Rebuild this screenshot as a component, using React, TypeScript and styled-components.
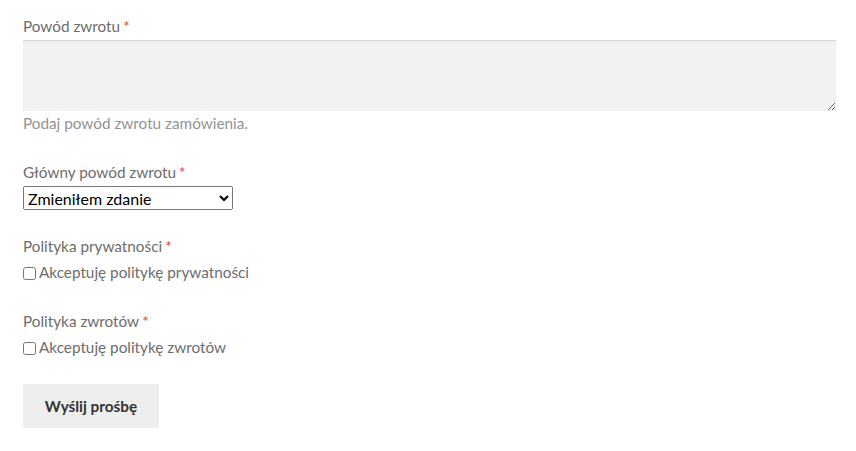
import { createGlobalStyle, styled } from "styled-components";

const GlobalStyle = createGlobalStyle`
    html, body {
        margin: 0;
        padding: 0;
        background: #ffffff;
    }
    body {
        font-family: Lato, "Liberation Sans", sans-serif;
        font-size: 15.3px;
        color: #6d6d6d;
    }
`;

const Form = styled.form`
    display: flex;
    flex-direction: column;
    padding: 14px 20px 0 23px;
`;

const FieldRow = styled.div<{$gap?: number}>`
    display: flex;
    flex-direction: column;
    align-items: flex-start;
    margin-bottom: ${props => props.$gap ?? 24}px;
`;

const Label = styled.label`
    line-height: 25px;
    color: #6d6d6d;
`;

const Required = styled.span`
    color: #e2401c;
    margin-left: 3px;
`;

const TextArea = styled.textarea`
    box-sizing: border-box;
    width: 813px;
    height: 71px;
    margin-top: 1px;
    border: 0;
    background-color: #f2f2f2;
    box-shadow: inset 0 1px 1px rgba(0, 0, 0, 0.125);
    font-family: inherit;
`;

const HelpText = styled.span`
    line-height: 25px;
    color: #939393;
`;

const Select = styled.select`
    box-sizing: border-box;
    width: 210px;
    height: 24px;
    margin-top: 1px;
    font-family: Lato, "Liberation Sans", sans-serif;
    font-size: 16px;
    color: #000000;
`;

const CheckLine = styled.label`
    display: flex;
    align-items: center;
    margin-top: 1px;
    line-height: 25px;
    color: #6d6d6d;
`;

const CheckBox = styled.input`
    width: 13px;
    height: 13px;
    margin: 1px 3px 0 0;
`;

const SubmitButton = styled.button`
    align-self: flex-start;
    width: 136px;
    height: 44px;
    border: 0;
    background-color: #eeeeee;
    color: #333333;
    font-family: Lato, "Liberation Sans", sans-serif;
    font-size: 15.3px;
    font-weight: 700;
`;

export default function App() {
    return (
        <>
            <GlobalStyle />
            <Form onSubmit={e => e.preventDefault()}>
                <FieldRow>
                    <Label>Powód zwrotu<Required>*</Required></Label>
                    <TextArea />
                    <HelpText>Podaj powód zwrotu zamówienia.</HelpText>
                </FieldRow>
                <FieldRow>
                    <Label>Główny powód zwrotu<Required>*</Required></Label>
                    <Select defaultValue="changed">
                        <option value="changed">Zmieniłem zdanie</option>
                        <option value="damaged">Produkt uszkodzony</option>
                        <option value="other">Inny powód</option>
                    </Select>
                </FieldRow>
                <FieldRow>
                    <Label>Polityka prywatności<Required>*</Required></Label>
                    <CheckLine>
                        <CheckBox type="checkbox" />
                        Akceptuję politykę prywatności
                    </CheckLine>
                </FieldRow>
                <FieldRow>
                    <Label>Polityka zwrotów<Required>*</Required></Label>
                    <CheckLine>
                        <CheckBox type="checkbox" />
                        Akceptuję politykę zwrotów
                    </CheckLine>
                </FieldRow>
                <SubmitButton type="submit">Wyślij prośbę</SubmitButton>
            </Form>
        </>
    );
}
